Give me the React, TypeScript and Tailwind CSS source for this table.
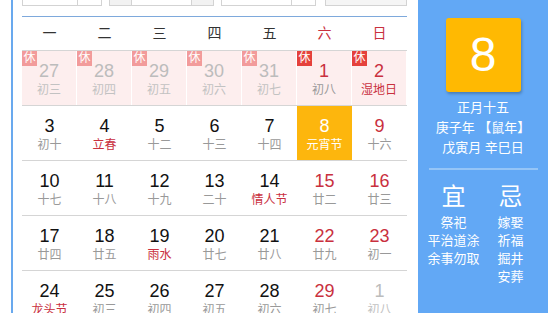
import React from "react";

type Day = {
  d: number;
  l: string;
  red?: boolean;
  lred?: boolean;
  muted?: boolean;
  rest?: boolean;
  sel?: boolean;
};

const weekDays = ["一", "二", "三", "四", "五", "六", "日"];

const rows: Day[][] = [
  [
    { d: 27, l: "初三", muted: true, rest: true },
    { d: 28, l: "初四", muted: true, rest: true },
    { d: 29, l: "初五", muted: true, rest: true },
    { d: 30, l: "初六", muted: true, rest: true },
    { d: 31, l: "初七", muted: true, rest: true },
    { d: 1, l: "初八", red: true, rest: true },
    { d: 2, l: "湿地日", red: true, lred: true, rest: true },
  ],
  [
    { d: 3, l: "初十" },
    { d: 4, l: "立春", lred: true },
    { d: 5, l: "十二" },
    { d: 6, l: "十三" },
    { d: 7, l: "十四" },
    { d: 8, l: "元宵节", sel: true },
    { d: 9, l: "十六", red: true },
  ],
  [
    { d: 10, l: "十七" },
    { d: 11, l: "十八" },
    { d: 12, l: "十九" },
    { d: 13, l: "二十" },
    { d: 14, l: "情人节", lred: true },
    { d: 15, l: "廿二", red: true },
    { d: 16, l: "廿三", red: true },
  ],
  [
    { d: 17, l: "廿四" },
    { d: 18, l: "廿五" },
    { d: 19, l: "雨水", lred: true },
    { d: 20, l: "廿七" },
    { d: 21, l: "廿八" },
    { d: 22, l: "廿九", red: true },
    { d: 23, l: "初一", red: true },
  ],
  [
    { d: 24, l: "龙头节", lred: true },
    { d: 25, l: "初三" },
    { d: 26, l: "初四" },
    { d: 27, l: "初五" },
    { d: 28, l: "初六" },
    { d: 29, l: "初七", red: true },
    { d: 1, l: "初八", muted: true },
  ],
];

function Cell({ c }: { c: Day }) {
  let box = "relative h-[54px] flex flex-col items-center pt-[9px]";
  if (c.sel) box += " bg-[#fdb60d]";
  else if (c.rest) box += " bg-[#fdeeee] border-r border-white";

  let num = "text-[18px] leading-[22px] text-[#111]";
  if (c.sel) num = "text-[18px] leading-[22px] text-white";
  else if (c.muted) num = "text-[18px] leading-[22px] text-[#bcbcbc]";
  else if (c.red) num = "text-[18px] leading-[22px] text-[#c9303e]";

  let lunar = "text-[12px] leading-[16px] text-[#999]";
  if (c.sel) lunar = "text-[12px] leading-[16px] text-white";
  else if (c.muted) lunar = "text-[12px] leading-[16px] text-[#c2c2c2]";
  else if (c.lred) lunar = "text-[12px] leading-[16px] text-[#c9303e]";

  return (
    <div className={box}>
      {c.rest && (
        <span
          className={
            c.muted
              ? "absolute left-0 top-0 w-[15px] h-[15px] bg-[#f29b9b] text-white text-[12px] leading-[15px] text-center"
              : "absolute left-0 top-0 w-[15px] h-[15px] bg-[#e5413c] text-white text-[12px] leading-[15px] text-center"
          }
        >
          休
        </span>
      )}
      <span className={num}>{c.d}</span>
      <span className={lunar}>{c.l}</span>
    </div>
  );
}

function TopBar() {
  return (
    <div className="h-[6px] overflow-hidden flex items-end">
      <div className="w-[80px] h-[30px] border border-[#d3d3d3] flex shrink-0">
        <div className="w-[55px] border-r border-[#d3d3d3]" />
        <div className="flex-1" />
      </div>
      <div className="ml-[7px] w-[105px] h-[30px] border border-[#d3d3d3] flex shrink-0">
        <div className="w-[22px] bg-[#f2f2f2] border-r border-[#d3d3d3]" />
        <div className="w-[60px] border-r border-[#d3d3d3]" />
        <div className="flex-1 bg-[#f2f2f2]" />
      </div>
      <div className="ml-[7px] w-[95px] h-[30px] border border-[#d3d3d3] flex shrink-0">
        <div className="w-[70px] border-r border-[#d3d3d3]" />
        <div className="flex-1" />
      </div>
      <div className="ml-[9px] w-[82px] h-[30px] border border-[#d3d3d3] bg-[#f5f5f5] shrink-0" />
    </div>
  );
}

function SidePanel() {
  return (
    <div className="w-[130px] shrink-0 bg-[#62a8f5] flex flex-col items-center text-white font-['Liberation_Sans','Noto_Sans_CJK_SC',sans-serif]">
      <div className="mt-[18px] w-[75px] h-[74px] rounded-[3px] bg-[#ffb902] shadow-[1px_2px_3px_rgba(0,0,0,0.25)] flex items-center justify-center">
        <span className="text-[48px] leading-none">8</span>
      </div>
      <div className="mt-[6px] text-[13px] leading-[20px] text-center">
        <div>正月十五</div>
        <div>庚子年 【鼠年】</div>
        <div>戊寅月 辛巳日</div>
      </div>
      <div className="mt-[10px] w-[109px] h-[2px] bg-[#95c5f7]" />
      <div className="mt-[13px] self-start pl-[7px] flex">
        <div className="w-[57px] flex flex-col items-center">
          <div className="text-[24px] leading-[28px]">宜</div>
          <div className="mt-[3px] text-[13px] leading-[18px] text-center">
            <div>祭祀</div>
            <div>平治道涂</div>
            <div>余事勿取</div>
          </div>
        </div>
        <div className="w-[57px] flex flex-col items-center">
          <div className="text-[24px] leading-[28px]">忌</div>
          <div className="mt-[3px] text-[13px] leading-[18px] text-center">
            <div>嫁娶</div>
            <div>祈福</div>
            <div>掘井</div>
            <div>安葬</div>
          </div>
        </div>
      </div>
    </div>
  );
}

export default function App() {
  return (
    <div className="w-[557px] h-[313px] overflow-hidden bg-white">
      <div className="ml-[11px] w-[537px] h-[313px] border-l-2 border-[#69a9ee] flex">
        <div className="w-[405px] shrink-0 pl-[9px] pr-[11px] font-['Liberation_Sans','Noto_Sans_CJK_SC',sans-serif]">
          <TopBar />
          <div className="mt-[10px] h-px bg-[#7ea9dc]" />
          <div className="grid grid-cols-7 h-[33px] items-center text-[14px] text-center">
            {weekDays.map((w, i) => (
              <span key={w} className={i >= 5 ? "text-[#c9303e]" : "text-[#333]"}>
                {w}
              </span>
            ))}
          </div>
          {rows.map((r, i) => (
            <div key={i} className="grid grid-cols-7 border-t border-[#d5d5d5]">
              {r.map((c, j) => (
                <Cell key={j} c={c} />
              ))}
            </div>
          ))}
        </div>
        <SidePanel />
      </div>
    </div>
  );
}
